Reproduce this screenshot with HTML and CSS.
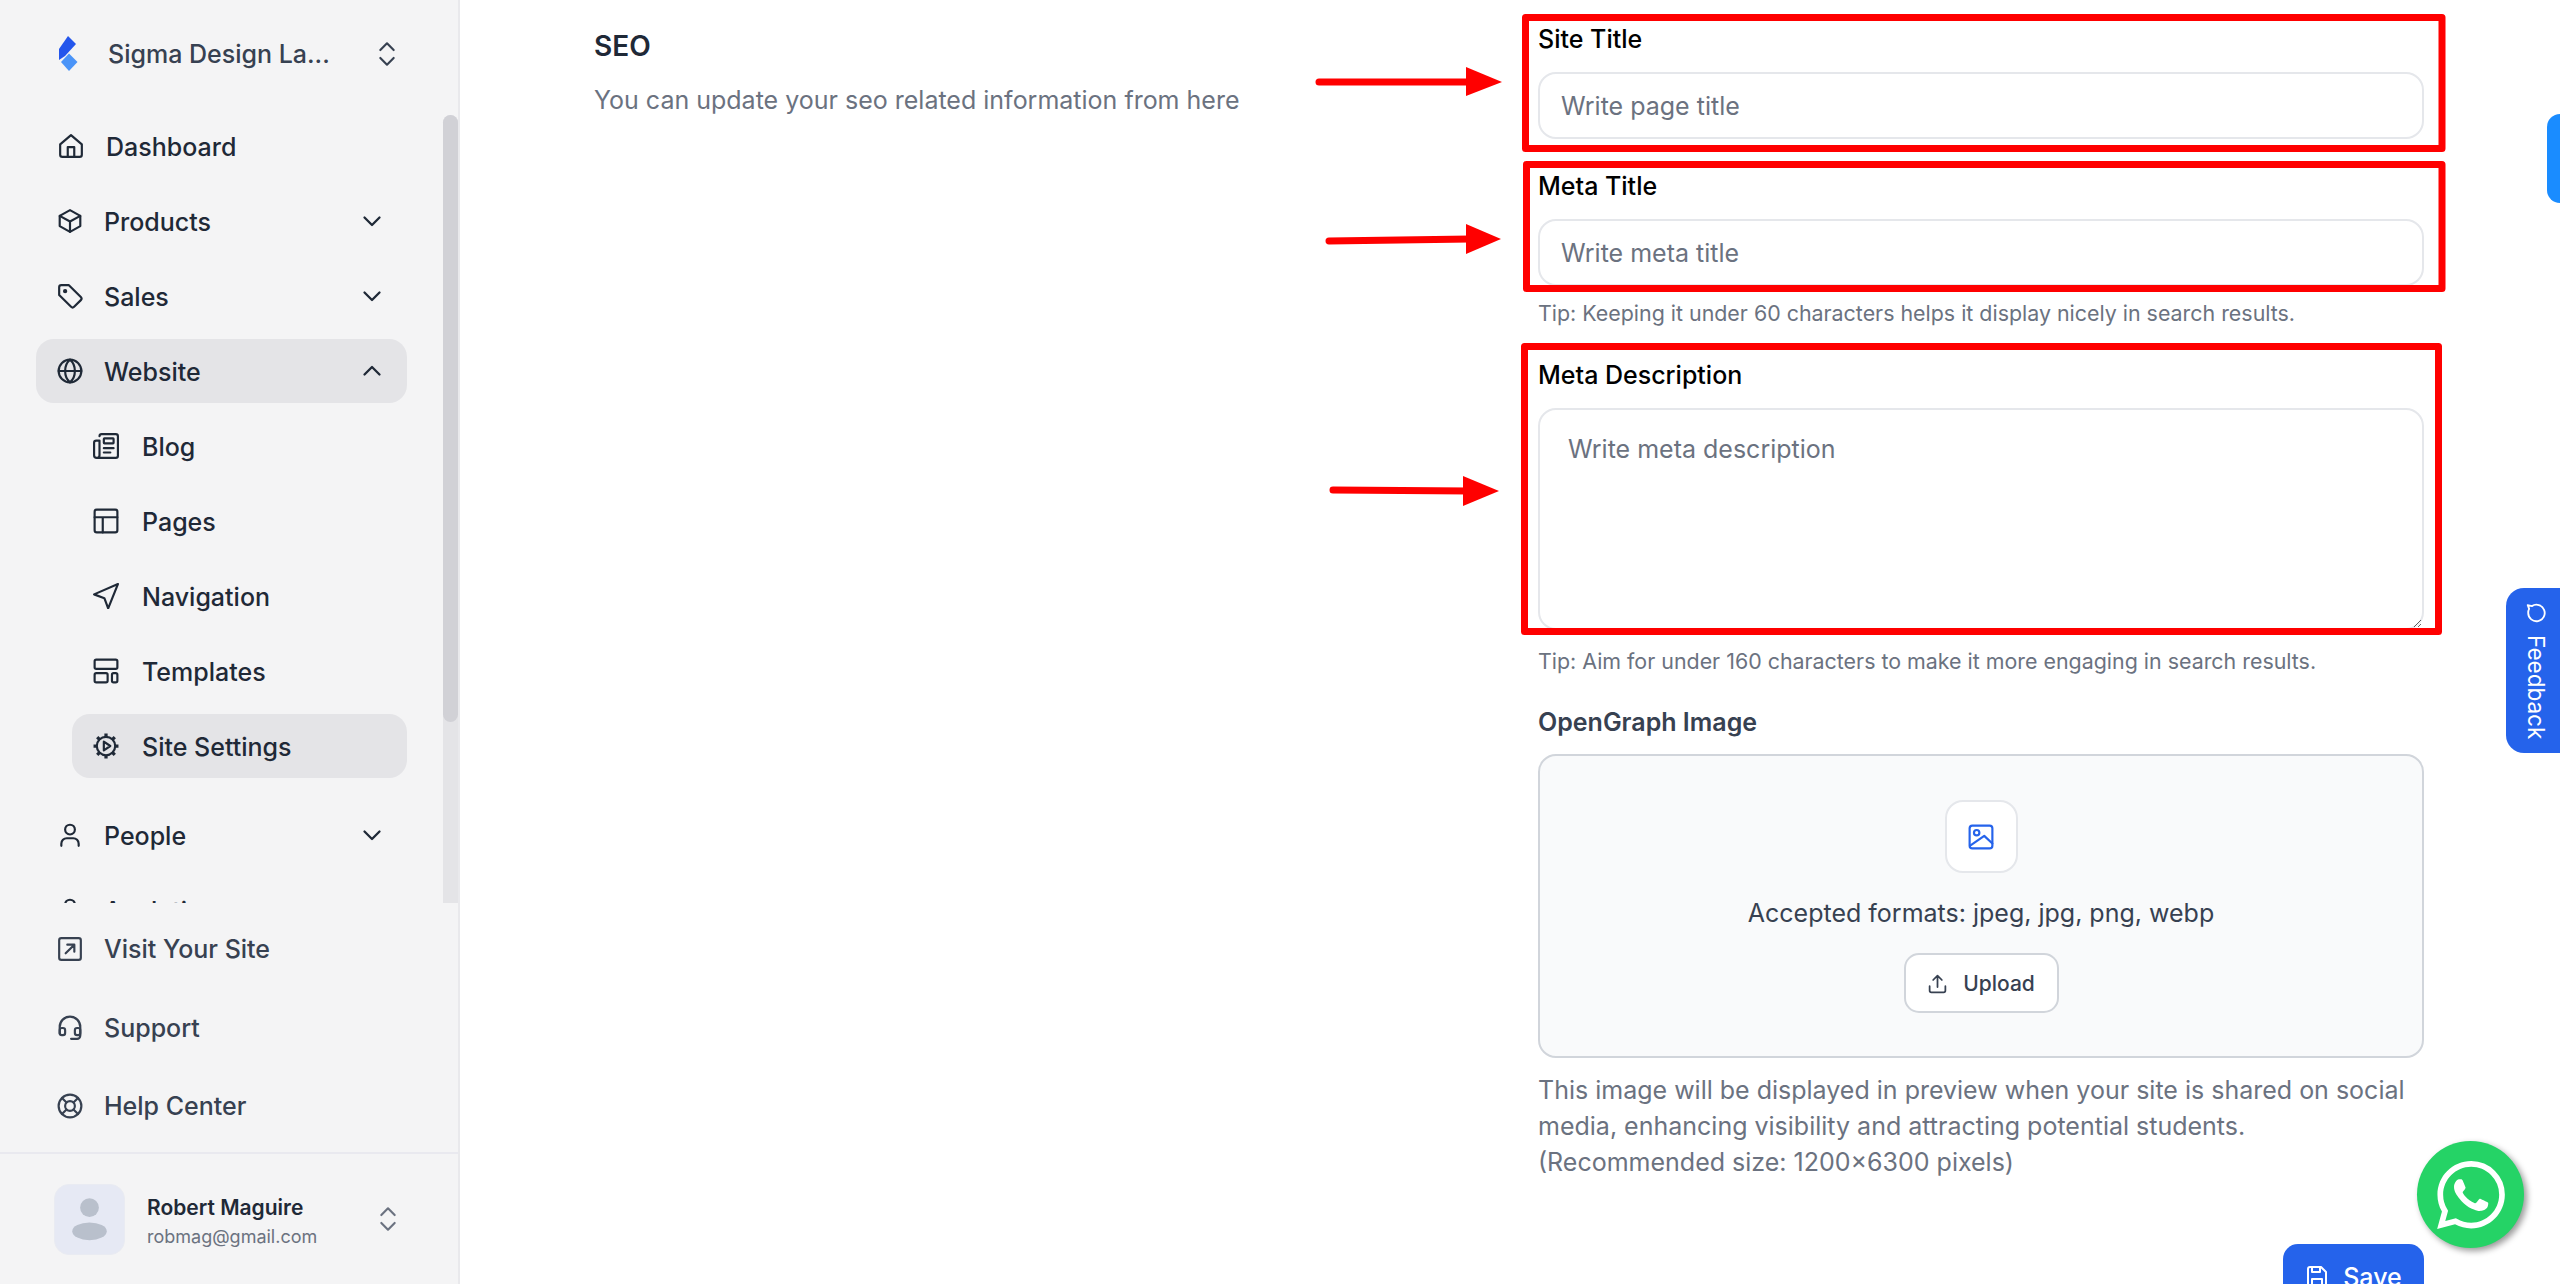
FILE: index.html
```html
<!DOCTYPE html>
<html lang="en">
<head>
    <meta charset="UTF-8">
    <meta name="viewport" content="width=device-width, initial-scale=1.0">
    <title>Site Settings</title>
    <link rel="stylesheet" href="styles.css">
</head>
<body>
    <svg class="sprite" aria-hidden="true">
        <symbol id="i-updown" viewBox="0 0 24 24"><path d="M7 9l5-5 5 5M7 15l5 5 5-5"/></symbol>
        <symbol id="i-down" viewBox="0 0 24 24"><path d="M4.500 8.500l7.500 7.500 7.500-7.500"/></symbol>
        <symbol id="i-up" viewBox="0 0 24 24"><path d="M4.500 15.500l7.500-7.500 7.500 7.500"/></symbol>
        <symbol id="i-home" viewBox="0 0 24 24"><path d="M2 10.500L12 2l10 8.500V20a2 2 0 0 1-2 2H4a2 2 0 0 1-2-2z"/><path d="M9 22v-9h6v9"/></symbol>
        <symbol id="i-box" viewBox="0 0 24 24"><path d="M12 2l9.500 5.300v9.400L12 22l-9.500-5.300V7.300z"/><path d="M2.500 7.300L12 12.500l9.500-5.200M12 12.500V22"/></symbol>
        <symbol id="i-tag" viewBox="0 0 24 24"><path d="M2 4a2 2 0 0 1 2-2h7l11 11a2 2 0 0 1 0 2.800L15.800 22a2 2 0 0 1-2.800 0L2 11z"/><circle cx="7.500" cy="7.500" r="1" fill="currentColor"/></symbol>
        <symbol id="i-globe" viewBox="0 0 24 24"><circle cx="12" cy="12" r="10.500"/><path d="M1.500 12h21M12 1.500c3.500 3 4.500 6.500 4.500 10.500s-1 7.500-4.500 10.500c-3.500-3-4.500-6.500-4.500-10.500s1-7.500 4.500-10.500z"/></symbol>
        <symbol id="i-news" viewBox="0 0 24 24"><path d="M6 3a2 2 0 0 1 2-2h13a2 2 0 0 1 2 2v18a2 2 0 0 1-2 2H3.500A2.500 2.500 0 0 1 1 20.500V9a2 2 0 0 1 2-2h3v13.500A2.500 2.500 0 0 1 3.500 23"/><rect x="10" y="5" width="9" height="4.500" rx=".5"/><path d="M10 14h9M10 18h6"/></symbol>
        <symbol id="i-layout" viewBox="0 0 24 24"><rect x="1.500" y="1.500" width="21" height="21" rx="2"/><path d="M1.500 8.500h21M9 8.500v14"/></symbol>
        <symbol id="i-nav" viewBox="0 0 24 24"><path d="M23 1L1 10.500l9.500 3.500 3.500 9.500z"/></symbol>
        <symbol id="i-template" viewBox="0 0 24 24"><rect x="1.500" y="1.500" width="21" height="8.500" rx="1.500"/><rect x="1.500" y="14" width="12" height="8.500" rx="1.500"/><rect x="17.500" y="14" width="5" height="8.500" rx="1.500"/></symbol>
        <symbol id="i-gear" viewBox="0 0 24 24"><circle cx="12" cy="12" r="8.500"/><path stroke-width="3" stroke-linecap="butt" d="M12 .5V4M12 20v3.500M.5 12H4M20 12h3.500M3.900 3.900l2.500 2.500M17.600 17.600l2.500 2.500M3.900 20.100l2.500-2.500M17.600 6.400l2.500-2.500"/><path d="M10 8l6 4-6 4z"/></symbol>
        <symbol id="i-user" viewBox="0 0 24 24"><circle cx="12" cy="7" r="4.500"/><path d="M4 22v-2a5 5 0 0 1 5-5h6a5 5 0 0 1 5 5v2"/></symbol>
        <symbol id="i-visit" viewBox="0 0 24 24"><rect x="2" y="2" width="20" height="20" rx="2"/><path d="M8 16l8-8M9.500 8H16v6.500"/></symbol>
        <symbol id="i-headset" viewBox="0 0 24 24"><path d="M2.500 17v-6a9.500 9.500 0 0 1 19 0v8a3 3 0 0 1-3 3H13"/><rect x="2.500" y="12" width="5" height="6.500" rx="2"/><rect x="16.500" y="12" width="5" height="6.500" rx="2"/></symbol>
        <symbol id="i-help" viewBox="0 0 24 24"><circle cx="12" cy="12" r="10.500"/><circle cx="12" cy="12" r="4.500"/><path d="M4.600 4.600l4.200 4.200M15.200 15.200l4.200 4.200M19.400 4.600l-4.200 4.200M8.800 15.200l-4.200 4.200"/></symbol>
        <symbol id="i-image" viewBox="0 0 24 24"><rect x="1.500" y="1.500" width="21" height="21" rx="2.500"/><circle cx="8" cy="8" r="2.500"/><path d="M2 20l13-9 7.500 7"/></symbol>
        <symbol id="i-upload" viewBox="0 0 24 24"><path d="M3 15v5a2 2 0 0 0 2 2h14a2 2 0 0 0 2-2v-5M12 16V3M7 8l5-5 5 5"/></symbol>
        <symbol id="i-save" viewBox="0 0 24 24"><path d="M3 4a2 2 0 0 1 2-2h11l5 5v13a2 2 0 0 1-2 2H5a2 2 0 0 1-2-2z"/><path d="M7 2v5h8V2M7 22v-8h10v8"/></symbol>
    </svg>

    <div class="app">
        <aside class="sidebar">
            <div class="brand">
                <svg class="brand-logo" viewBox="0 0 20 36">
                    <polygon points="0,13 9,0 17,8 6,20 0,24" fill="#2456ec"/>
                    <polygon points="10,17.500 18.500,26 10,35 2,26" fill="#4a94f8"/>
                </svg>
                <span class="brand-name">Sigma Design La...</span>
                <svg class="icon switch"><use href="#i-updown"/></svg>
            </div>

            <div class="nav-wrap">
                <nav class="nav">
                    <a class="nav-item nav-home"><svg class="icon"><use href="#i-home"/></svg><span>Dashboard</span></a>
                    <a class="nav-item"><svg class="icon"><use href="#i-box"/></svg><span>Products</span><svg class="icon caret"><use href="#i-down"/></svg></a>
                    <a class="nav-item"><svg class="icon"><use href="#i-tag"/></svg><span>Sales</span><svg class="icon caret"><use href="#i-down"/></svg></a>
                    <a class="nav-item is-open"><svg class="icon"><use href="#i-globe"/></svg><span>Website</span><svg class="icon caret"><use href="#i-up"/></svg></a>
                    <div class="subnav">
                        <a class="nav-item"><svg class="icon"><use href="#i-news"/></svg><span>Blog</span></a>
                        <a class="nav-item"><svg class="icon"><use href="#i-layout"/></svg><span>Pages</span></a>
                        <a class="nav-item"><svg class="icon"><use href="#i-nav"/></svg><span>Navigation</span></a>
                        <a class="nav-item"><svg class="icon"><use href="#i-template"/></svg><span>Templates</span></a>
                        <a class="nav-item is-open"><svg class="icon"><use href="#i-gear"/></svg><span>Site Settings</span></a>
                    </div>
                    <a class="nav-item"><svg class="icon"><use href="#i-user"/></svg><span>People</span><svg class="icon caret"><use href="#i-down"/></svg></a>
                    <a class="nav-item"><svg class="icon"><use href="#i-user"/></svg><span>Analytics</span></a>
                </nav>
                <div class="scroll-track"><div class="scroll-thumb"></div></div>
            </div>

            <div class="side-links">
                <a class="side-link"><svg class="icon"><use href="#i-visit"/></svg><span>Visit Your Site</span></a>
                <a class="side-link"><svg class="icon"><use href="#i-headset"/></svg><span>Support</span></a>
                <a class="side-link"><svg class="icon"><use href="#i-help"/></svg><span>Help Center</span></a>
            </div>

            <div class="account">
                <svg class="avatar" viewBox="0 0 70 70">
                    <circle cx="35" cy="23" r="9.500"/>
                    <ellipse cx="35" cy="47" rx="17.500" ry="9"/>
                </svg>
                <div class="account-info">
                    <div class="account-name">Robert Maguire</div>
                    <div class="account-mail">robmag@gmail.com</div>
                </div>
                <svg class="icon switch account-switch"><use href="#i-updown"/></svg>
            </div>
        </aside>

        <main class="main">
            <section class="seo-intro">
                <h2>SEO</h2>
                <p>You can update your seo related information from here</p>
            </section>

            <form class="seo-form">
                <label class="field-label">Site Title</label>
                <input class="text-input" type="text" placeholder="Write page title">

                <label class="field-label spaced">Meta Title</label>
                <input class="text-input" type="text" placeholder="Write meta title">
                <p class="tip">Tip: Keeping it under 60 characters helps it display nicely in search results.</p>

                <label class="field-label spaced">Meta Description</label>
                <textarea class="text-area" placeholder="Write meta description"></textarea>
                <p class="tip tip-area">Tip: Aim for under 160 characters to make it more engaging in search results.</p>

                <label class="og-label">OpenGraph Image</label>
                <div class="dropzone">
                    <div class="drop-icon"><svg class="icon"><use href="#i-image"/></svg></div>
                    <p>Accepted formats: jpeg, jpg, png, webp</p>
                    <button class="upload-btn" type="button"><svg class="icon"><use href="#i-upload"/></svg>Upload</button>
                </div>
                <p class="og-help">This image will be displayed in preview when your site is shared on social media, enhancing visibility and attracting potential students. (Recommended size: 1200×6300 pixels)</p>

                <div class="form-actions">
                    <button class="save-btn" type="button"><svg class="icon"><use href="#i-save"/></svg>Save</button>
                </div>
            </form>
        </main>
    </div>

    <!-- red markup drawn on top of the screenshot -->
    <svg class="markup" viewBox="0 0 2560 1284">
        <g fill="none" stroke="#ff0000" stroke-width="7" stroke-linejoin="round">
            <rect x="1525.500" y="17.500" width="916.500" height="131"/>
            <rect x="1526.500" y="164.500" width="915.500" height="124"/>
            <rect x="1524.500" y="346.500" width="914" height="285"/>
        </g>
        <g fill="none" stroke="#ff0000" stroke-width="7" stroke-linecap="round">
            <path d="M1319 82H1470"/>
            <path d="M1329 241L1470 239"/>
            <path d="M1333 490L1470 491"/>
        </g>
        <g fill="#ff0000">
            <polygon points="1466,67 1502,82 1466,96"/>
            <polygon points="1466,224 1501,239 1466,254"/>
            <polygon points="1463,476 1499,491 1463,506"/>
        </g>
    </svg>

    <div class="side-tab"></div>
    <a class="feedback">
        <svg viewBox="0 0 24 24"><path d="M3 3.500l4.500 1A9 9 0 1 1 3.500 12c0-2 .4-3.500 1-4.500z"/></svg>
        <span>Feedback</span>
    </a>
    <a class="whatsapp">
        <svg viewBox="0 0 24 24"><path d="M17.472 14.382c-.297-.149-1.758-.867-2.030-.967-.273-.099-.471-.148-.670.150-.197.297-.767.966-.940 1.164-.173.199-.347.223-.644.075-.297-.150-1.255-.463-2.390-1.475-.883-.788-1.480-1.761-1.653-2.059-.173-.297-.018-.458.130-.606.134-.133.298-.347.446-.520.149-.174.198-.298.298-.497.099-.198.050-.371-.025-.520-.075-.149-.669-1.612-.916-2.207-.242-.579-.487-.500-.669-.510-.173-.008-.371-.010-.570-.010-.198 0-.520.074-.792.372-.272.297-1.040 1.016-1.040 2.479 0 1.462 1.065 2.875 1.213 3.074.149.198 2.096 3.200 5.077 4.487.709.306 1.262.489 1.694.625.712.227 1.360.195 1.871.118.571-.085 1.758-.719 2.006-1.413.248-.694.248-1.289.173-1.413-.074-.124-.272-.198-.570-.347m-5.421 7.403h-.004a9.870 9.870 0 0 1-5.031-1.378l-.361-.214-3.741.982.998-3.648-.235-.374a9.860 9.860 0 0 1-1.510-5.260c.001-5.450 4.436-9.884 9.888-9.884 2.640 0 5.122 1.030 6.988 2.898a9.825 9.825 0 0 1 2.893 6.994c-.003 5.450-4.437 9.884-9.885 9.884m8.413-18.297A11.815 11.815 0 0 0 12.050 0C5.495 0 .160 5.335.157 11.892c0 2.096.547 4.142 1.588 5.945L.057 24l6.305-1.654a11.882 11.882 0 0 0 5.683 1.448h.005c6.554 0 11.890-5.335 11.893-11.893a11.821 11.821 0 0 0-3.480-8.413z"/></svg>
    </a>
</body>
</html>
```

FILE: styles.css
```css
* {
    margin: 0;
    padding: 0;
    box-sizing: border-box;
}

html, body {
    height: 100%;
    overflow: hidden;
}

body {
    font-family: Inter, 'Noto Sans', sans-serif;
    font-size: 25px;
    line-height: 36px;
    color: #1f2937;
    background: white;
}

.sprite {
    display: none;
}

.icon {
    width: 24px;
    height: 24px;
    flex: none;
    fill: none;
    stroke: currentColor;
    stroke-width: 2;
    stroke-linecap: round;
    stroke-linejoin: round;
}

.app {
    display: flex;
    height: 1284px;
}

/* sidebar */
.sidebar {
    width: 460px;
    flex: none;
    display: flex;
    flex-direction: column;
    background: #f4f4f5;
    border-right: 2px solid #e9e9ec;
}

.brand {
    height: 108px;
    flex: none;
    display: flex;
    align-items: center;
    padding-left: 59px;
    color: #374151;
    font-weight: 500;
}

.brand-logo {
    width: 20px;
    height: 36px;
    flex: none;
}

.brand-name {
    margin-left: 29px;
    width: 263px;
}

.switch {
    width: 32px;
    height: 32px;
    stroke-width: 1.600;
}

.nav-wrap {
    position: relative;
    height: 795px;
    flex: none;
    overflow: hidden;
}

.nav {
    display: flex;
    flex-direction: column;
    gap: 11px;
    padding: 6px 0 0 36px;
    width: 407px;
}

.nav-item {
    height: 64px;
    flex: none;
    display: flex;
    align-items: center;
    gap: 22px;
    padding: 0 23px 0 22px;
    border-radius: 18px;
    font-weight: 500;
    color: #1f2937;
}

.nav-item .icon:not(.caret),
.side-link .icon {
    width: 26px;
    height: 26px;
    margin: 0 -1px;
}

.nav-item span {
    position: relative;
    top: 1px;
}

.nav-home {
    padding-left: 23px;
    gap: 23px;
}

.nav-item.is-open {
    background: #e4e4e7;
}

.caret {
    margin-left: auto;
    stroke-width: 2.300;
}

.subnav {
    display: flex;
    flex-direction: column;
    gap: 11px;
    padding: 0 0 14px 36px;
}

.subnav .nav-item {
    gap: 24px;
}

.scroll-track {
    position: absolute;
    top: 7px;
    right: 0;
    bottom: 0;
    width: 15px;
    background: #e4e4e7;
    border-radius: 8px 8px 0 0;
}

.scroll-thumb {
    height: 607px;
    background: #d1d1d6;
    border-radius: 8px;
}

.side-links {
    height: 251px;
    flex: none;
    padding-top: 7px;
    border-bottom: 2px solid #e9e9ef;
}

.side-link {
    height: 78.500px;
    display: flex;
    align-items: center;
    gap: 22px;
    padding-left: 58px;
    font-weight: 500;
    color: #374151;
}

.account {
    flex: 1;
    display: flex;
    align-items: center;
    padding-left: 54px;
}

.avatar {
    width: 71px;
    height: 71px;
    flex: none;
    background: #e6e9f4;
    border: 1px solid #e9ebf2;
    border-radius: 15px;
    fill: #b9c0cc;
}

.account-info {
    margin: 5px 0 0 22px;
    width: 225px;
}

.account-name {
    font-size: 21px;
    line-height: 30px;
    font-weight: 600;
    color: #1f2937;
}

.account-mail {
    font-size: 18px;
    line-height: 28px;
    color: #6b7280;
}

.account-switch {
    color: #6b7280;
}

/* page content */
.main {
    flex: 1;
    display: grid;
    grid-template-columns: 944px 886px;
    align-items: start;
    padding: 21px 0 0 134px;
    overflow: hidden;
}

.seo-intro h2 {
    font-size: 28px;
    font-weight: 600;
    line-height: 50px;
    color: #1f2937;
}

.seo-intro p {
    margin-top: 11px;
    color: #6b7280;
}

.seo-form {
    display: flex;
    flex-direction: column;
}

.field-label {
    font-weight: 500;
    color: black;
    margin-bottom: 15px;
}

.field-label.spaced {
    margin-top: 29px;
}

.text-input,
.text-area {
    display: block;
    width: 100%;
    font: inherit;
    color: #1f2937;
    background: white;
    border: 2px solid #e5e7eb;
    border-radius: 18px;
    outline: none;
}

.text-input {
    height: 67px;
    padding: 0 21px;
}

.text-area {
    height: 222px;
    padding: 21px 28px;
}

.text-input::placeholder,
.text-area::placeholder {
    color: #6b7280;
    opacity: 1;
}

.tip {
    margin-top: 12px;
    font-size: 21.400px;
    line-height: 30px;
    color: #6b7280;
}

.tip.tip-area {
    margin-top: 16px;
}

.og-label {
    margin-top: 28px;
    margin-bottom: 14px;
    font-weight: 600;
    color: #374151;
}

.dropzone {
    height: 304px;
    display: flex;
    flex-direction: column;
    align-items: center;
    padding-top: 44px;
    background: #f9fafb;
    border: 2px solid #d1d5db;
    border-radius: 18px;
    color: #374151;
}

.drop-icon {
    width: 73px;
    height: 73px;
    display: flex;
    align-items: center;
    justify-content: center;
    background: white;
    border: 2px solid #e5e7eb;
    border-radius: 18px;
    color: #2563eb;
}

.drop-icon .icon {
    width: 26px;
    height: 26px;
}

.dropzone p {
    margin: 22px 0;
}

.upload-btn {
    width: 155px;
    height: 60px;
    display: flex;
    align-items: center;
    justify-content: center;
    gap: 15px;
    font: 500 21px Inter, sans-serif;
    color: #374151;
    background: white;
    border: 2px solid #d1d5db;
    border-radius: 15px;
}

.upload-btn .icon {
    width: 21px;
    height: 21px;
}

.og-help {
    margin-top: 14px;
    color: #6b7280;
}

.form-actions {
    display: flex;
    justify-content: flex-end;
    margin-top: 64px;
}

.save-btn {
    width: 141px;
    height: 66px;
    display: flex;
    align-items: center;
    justify-content: center;
    gap: 14px;
    font: 500 25px Inter, sans-serif;
    color: white;
    background: #2563eb;
    border: none;
    border-radius: 15px;
}

/* things floating over the page */
.markup {
    position: absolute;
    top: 0;
    left: 0;
    width: 2560px;
    height: 1284px;
    pointer-events: none;
}

.side-tab {
    position: absolute;
    top: 114px;
    right: 0;
    width: 13px;
    height: 89px;
    background: #1a8cff;
    border-radius: 14px 0 0 14px;
}

.feedback {
    position: absolute;
    top: 588px;
    right: 0;
    width: 54px;
    height: 165px;
    display: flex;
    flex-direction: column;
    align-items: center;
    gap: 11px;
    padding: 14px 0 0 5px;
    background: #2563eb;
    border-radius: 18px 0 0 18px;
    color: white;
    font-size: 22.500px;
    line-height: 24px;
}

.feedback svg {
    width: 22px;
    height: 22px;
    flex: none;
    fill: none;
    stroke: white;
    stroke-width: 2;
    stroke-linejoin: round;
}

.feedback span {
    writing-mode: vertical-rl;
}

.whatsapp {
    position: absolute;
    top: 1141px;
    left: 2417px;
    width: 107px;
    height: 107px;
    display: flex;
    align-items: center;
    justify-content: center;
    background: #25d366;
    border-radius: 50%;
    box-shadow: 3px 3px 6px rgba(0,0,0,0.4);
}

.whatsapp svg {
    width: 68px;
    height: 68px;
    fill: white;
}
```
